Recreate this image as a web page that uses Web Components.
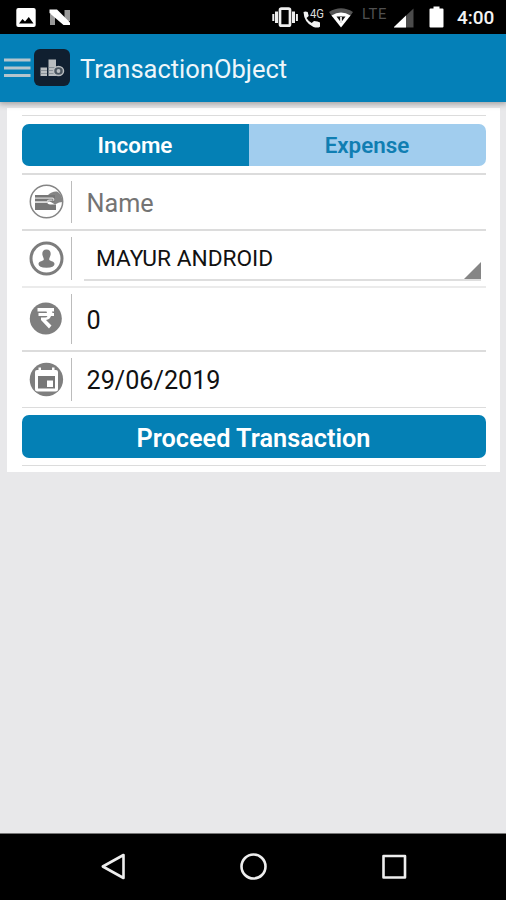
<!DOCTYPE html>
<html lang="en">
<head>
<meta charset="utf-8">
<title>TransactionObject</title>
<style>
html,body{margin:0;height:100%}
body{font-family:Roboto,"Liberation Sans",sans-serif;background:#e8e8ea;overflow:hidden}
</style>
</head>
<body>
<transaction-app></transaction-app>
<script>
const define = (name, markup) => {
  const t = document.createElement('template');
  t.innerHTML = markup;
  customElements.define(name, class extends HTMLElement {
    constructor() {
      super();
      this.attachShadow({ mode: 'open' }).append(t.content.cloneNode(true));
    }
  });
};

define('status-bar', `
<style>
:host{display:flex;height:34px;background:#000;color:#f4f4f4;box-sizing:border-box;padding-left:15px;align-items:flex-start}
svg{display:block;flex:none}
.lte{font-size:14.800px;line-height:16px;color:#505050;width:32px;margin-top:5.500px;margin-left:1px;letter-spacing:.6px}
.time{font-size:19px;line-height:20px;font-weight:500;margin:8px 0 0 13px;white-space:nowrap}
</style>
<svg width="257" height="34" viewBox="15 0 257 34">
  <rect x="16.300" y="8" width="19.400" height="19" rx="2" fill="#fff"/>
  <path d="M19 23.500l3.500-4.500 2.500 2.500 3.800-4.500 4.700 6.500z" fill="#000"/>
  <path d="M50 14h5v11h-5zM64.500 10h5.500v11h-5.500z" fill="#999"/>
  <path d="M49.500 9.500h7.500L70 22.500V25h-6.500L49.500 13z" fill="#fff"/>
</svg>
<svg width="89" height="34" viewBox="272 0 89 34">
  <g stroke="#eee" fill="none">
    <rect x="280" y="8.700" width="10" height="17" rx="1.500" stroke-width="2.700"/>
    <path d="M276.500 11.500v11.500M293.500 11.500v11.500" stroke-width="3"/>
    <path d="M273.300 14v7M296.900 14v7" stroke-width="2"/>
  </g>
  <path d="M303.500 12q2-1.200 4.200 0l1 4-2.200 2q2 3.500 5.200 5l2.300-2q4 .3 6 1.500v4.200q-2.500 1.600-6.500.2-9.500-4-10-14.900z" fill="#f2f2f2"/>
  <text x="310" y="17.500" font-size="12" fill="#ddd" textLength="14" lengthAdjust="spacingAndGlyphs">4G</text>
  <path d="M329 12q12-7.500 24 0l-3.500 5q-8.500-5.500-17 0z" fill="#555"/>
  <path d="M331.500 15.500q9.500-6 19 0L341 27.500z" fill="#fff"/>
  <path d="M336.500 16.500h9l-4.500 6z" fill="#111"/>
  <path d="M340 17h2v6h-2z" fill="#ddd"/>
</svg>
<span class="lte">LTE</span>
<svg width="50" height="34" viewBox="394 0 50 34">
  <path d="M393.500 27.500L413.500 8.500v19z" fill="#4b4b4b"/>
  <path d="M393.500 27.500L406 15.500v12z" fill="#fff"/>
  <path d="M430.500 8.500h3v-2h6v2h3q1 0 1 1v17q0 1-1 1h-12q-1 0-1-1v-17q0-1 1-1z" fill="#fff"/>
</svg>
<span class="time">4:00</span>`);

define('app-bar', `
<style>
:host{display:flex;align-items:center;height:67.500px;box-sizing:border-box;padding-left:4px;background:#0480b8;box-shadow:0 1px 6px 1px rgba(0,0,0,.32);position:relative;z-index:1;color:#eef6fa}
.menu{flex:none;margin-right:3px}
.title{font-size:25.500px;margin-left:10px;white-space:nowrap;line-height:30px;margin-top:2px}
svg{display:block}
</style>
<svg class="menu" width="27" height="24" viewBox="0 0 27 24"><path d="M0 4h26.500M0 12h26.500M0 19.500h26.500" stroke="#b4c5cd" stroke-width="3.200"/></svg>
<svg width="36" height="37" viewBox="0 0 36 37">
  <rect width="36" height="37" rx="6" fill="#101f30"/>
  <path d="M6.500 18.500h6.500v8.500h-6.500zM14.500 10.500h7.500v16.500h-7.500z" fill="#b9bdc0"/>
  <path d="M6.500 21.500h6.500M6.500 24.500h6.500M14.500 18.500h7.500M14.500 21.500h7.500M14.500 24.500h7.500" stroke="#7c858e" stroke-width=".8"/>
  <ellipse cx="24.500" cy="22" rx="5" ry="4.500" fill="#4a5560" stroke="#b9bdc0" stroke-width="1.500"/>
  <circle cx="24.500" cy="22" r="1.900" fill="#b9bdc0"/>
</svg>
<span class="title"><slot></slot></span>`);

define('thin-rule', `<style>:host{display:block;height:1.500px;background:var(--rule,#dcdcdc)}</style>`);

define('segmented-toggle', `
<style>
:host{display:flex;height:42px;border-radius:7px;overflow:hidden;font-size:22.400px;font-weight:600;line-height:42px;text-align:center;white-space:nowrap}
.on{width:227px;background:#0480b5;color:#fff}
.off{flex:1;background:#a1cdee;color:#107eb2}
span{display:block}
</style>
<div class="on"><span><slot name="on"></slot></span></div><div class="off"><span><slot name="off"></slot></span></div>`);

define('form-row', `
<style>
:host{display:flex;align-items:center;box-sizing:border-box;height:var(--h,54px);padding-left:7px}
.bar{width:1.500px;height:calc(var(--h,54px) - 12px);background:#bcbcbc;margin-left:7px;flex:none}
.value{flex:1;align-self:stretch;display:flex;align-items:center;box-sizing:border-box;padding:var(--drop,3.500px) 0 0 var(--inset,14.500px);font-size:25.200px;color:var(--ink,#111);white-space:nowrap}
::slotted(svg){display:block;width:35px;height:35px;flex:none}
</style>
<slot name="icon"></slot><div class="bar"></div><div class="value"><slot></slot></div>`);

define('spinner-field', `
<style>
:host{display:flex;flex:1;align-self:stretch;align-items:flex-end;justify-content:space-between;box-sizing:border-box;border-bottom:2px solid #dedede;margin:0 5px 5px 0;padding-left:12px;font-size:22.700px;color:#111}
span{align-self:center;line-height:28px;margin-top:8.500px}
svg{display:block}
</style>
<span><slot></slot></span><svg width="17" height="17"><path d="M0 17L17 0v17z" fill="#858585"/></svg>`);

define('action-button', `
<style>
:host{display:block;height:42.500px;border-radius:7px;background:#0480b5;color:#fff;font-size:25.300px;font-weight:600;line-height:47px;text-align:center;white-space:nowrap}
</style><slot></slot>`);

define('nav-bar', `
<style>
:host{display:flex;height:67px;box-sizing:border-box;border-top:1px solid #777;background:#000;justify-content:space-between;align-items:center;padding:0 98px 0 100px}
svg{display:block;fill:none;stroke:#eee;stroke-width:2.600;stroke-linejoin:round}
</style>
<svg width="28" height="30"><path d="M2.800 14.500L23.500 3v23z"/></svg>
<svg width="28" height="30" viewBox="1 0 28 30"><circle cx="14.500" cy="14.500" r="12"/></svg>
<svg width="28" height="30"><rect x="3.500" y="4" width="21.500" height="21.500"/></svg>`);

define('transaction-app', `
<style>
:host{display:flex;flex-direction:column;width:506px;height:900px;background:#e8e8ea}
main{flex:1;padding:6.500px 6.500px 0 7px}
.card{box-sizing:border-box;height:364px;background:#fff;padding:6.500px 14px 0 14.500px;display:flex;flex-direction:column}
.card>*{flex:none}
segmented-toggle{margin:7.500px 0 7.500px}
action-button{margin:7px 0 7px}
</style>
<status-bar></status-bar>
<app-bar>TransactionObject</app-bar>
<main><section class="card">
  <thin-rule></thin-rule>
  <segmented-toggle><span slot="on">Income</span><span slot="off">Expense</span></segmented-toggle>
  <thin-rule></thin-rule>
  <form-row style="--ink:#747474;--h:54.500px">
    <svg slot="icon" viewBox="0 0 35 35">
      <circle cx="17.500" cy="17.500" r="16.200" fill="#fff" stroke="#858585" stroke-width="1.500"/>
      <path d="M19 11q4-4 9-3.500 5 2 5.500 10.500l-3.500.5-4 2-5-3z" fill="#858585"/>
      <path d="M6 11h20v6.500H6zM6 18.800h12q1 1.700 3 1.700h6v5.500H6z" fill="#777"/>
      <path d="M6 14.200h17.500q2 .5 1 2.500M6 18.200h12.500q-.5-2 2-2h3" fill="none" stroke="#d8d8d8" stroke-width="1.200"/>
    </svg>Name</form-row>
  <thin-rule></thin-rule>
  <form-row style="--inset:12px;--drop:0px;--h:55.500px">
    <svg slot="icon" viewBox="0 0 35 35">
      <circle cx="17.500" cy="17.500" r="15.500" fill="#fff" stroke="#7d7d7d" stroke-width="3"/>
      <path d="M17.500 8.500c3.300 0 4.500 2.200 4.100 5.200-.3 2-1.400 3-1.400 4.800 0 1.500 4.800 1.500 5.300 4.200q.4 4-8 4t-8-4c.5-2.700 5.300-2.700 5.300-4.200 0-1.800-1.100-2.800-1.400-4.800-.4-3 .8-5.200 4.100-5.200z" fill="#7d7d7d"/>
    </svg><spinner-field>MAYUR ANDROID</spinner-field></form-row>
  <thin-rule style="--rule:#ebebeb"></thin-rule>
  <form-row style="--h:62.500px">
    <svg slot="icon" viewBox="0 0 35 35">
      <circle cx="16.800" cy="17.500" r="16" fill="#7f7f7f"/>
      <path d="M8.500 7h16.500v3.500h-2l.5 1.500h1.500v3h-3q-1 3.500-5 4l5.500 5.500-2.500 3-8-8.500v-2.500h4q2 0 2.500-1.500H9.500v-3h8.500l-.5-1.500h-9z" fill="#fff"/>
    </svg>0</form-row>
  <thin-rule></thin-rule>
  <form-row style="--h:55px">
    <svg slot="icon" viewBox="0 0 35 35">
      <circle cx="17.400" cy="17.500" r="16.700" fill="#7f7f7f"/>
      <path d="M9.500 5.500h2.500v2.500h11v-2.500h2.500v2.500h1.500q2 0 2 2v17q0 2.500-2.500 2.500h-18q-2.500 0-2.500-2.500v-17q0-2 2-2h1.500z" fill="#fff"/>
      <path d="M9 14h17v12.500H9z" fill="#777"/>
      <path d="M18 18.500h6v6.500h-6z" fill="#fff"/>
    </svg>29/06/2019</form-row>
  <thin-rule></thin-rule>
  <action-button>Proceed Transaction</action-button>
  <thin-rule></thin-rule>
</section></main>
<nav-bar></nav-bar>`);
</script>
</body>
</html>
